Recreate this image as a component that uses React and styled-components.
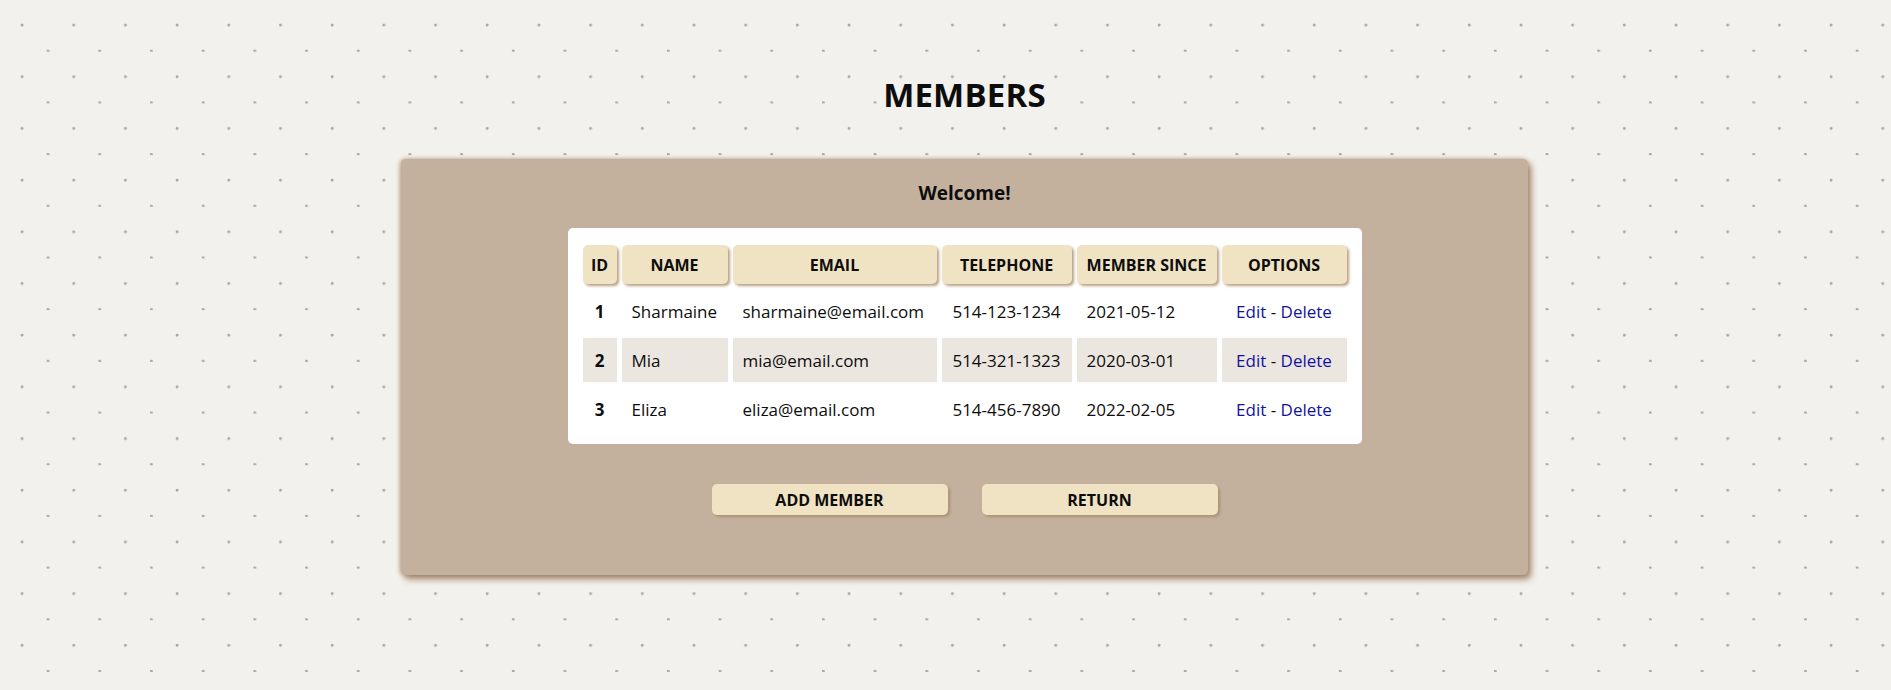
import React from "react";
import styled, { createGlobalStyle } from "styled-components";

const GlobalStyle = createGlobalStyle`
  body {
    margin: 0;
    font-family: "Open Sans", "Liberation Sans", sans-serif;
    color: #0d0d0d;
    background-color: #f3f1ed;
    background-image:
      radial-gradient(circle at 22px 25px, #aaa59f 1.1px, transparent 1.8px),
      radial-gradient(circle at 48px 51px, #aaa59f 1.1px, transparent 1.8px);
    background-size: 51.7px 51.7px;
    min-height: 690px;
  }
`;

const Page = styled.div`
  padding-left: 38px;
  padding-top: 71px;
  display: flex;
  flex-direction: column;
  align-items: center;
`;

const Title = styled.h1`
  margin: 0;
  font-size: 33px;
  line-height: 48px;
  font-weight: 700;
  letter-spacing: 0.2px;
`;

const Card = styled.div`
  margin-top: 40px;
  width: 1127px;
  box-sizing: border-box;
  background: #c4b19d;
  border-radius: 5px;
  box-shadow: 3px 4px 7px #9f8164, -1px 0 4px rgba(150, 120, 90, 0.6);
  padding: 20px 0 60px;
  display: flex;
  flex-direction: column;
  align-items: center;
`;

const Welcome = styled.h2`
  margin: 0;
  font-size: 19px;
  line-height: 28px;
  font-weight: 700;
`;

const Panel = styled.div`
  margin-top: 21px;
  background: #fff;
  border-radius: 5px;
  padding: 12px 10px 8px;
`;

const Table = styled.table`
  border-collapse: separate;
  border-spacing: 5px;
  font-size: 17px;
`;

const Head = styled.th`
  width: ${(p) => p.$w}px;
  height: 39px;
  box-sizing: border-box;
  padding: 0;
  background: #f0e3c4;
  border-radius: 5px;
  box-shadow: 2px 2px 3px #b79f84;
  font-size: 16px;
  font-weight: 700;
  text-align: center;
`;

const Row = styled.tr`
  height: 44px;
`;

const Cell = styled.td`
  padding: 0 10px;
  background: ${(p) => (p.$shade ? "#ece6e0" : "transparent")};
  text-align: ${(p) => p.$align || "left"};
  font-weight: ${(p) => (p.$bold ? 700 : 400)};
  white-space: nowrap;
`;

const Link = styled.a`
  color: #1212a0;
  text-decoration: none;
  cursor: pointer;
`;

const Buttons = styled.div`
  margin-top: 40px;
  display: flex;
  gap: 34px;
`;

const Button = styled.button`
  width: 236px;
  height: 31px;
  border: none;
  border-radius: 5px;
  background: #f0e3c4;
  box-shadow: 2px 2px 3px #ab9276;
  font-family: inherit;
  font-size: 16px;
  font-weight: 700;
  color: #0d0d0d;
  cursor: pointer;
`;

const columns = [
  { label: "ID", w: 34 },
  { label: "NAME", w: 106 },
  { label: "EMAIL", w: 204 },
  { label: "TELEPHONE", w: 130 },
  { label: "MEMBER SINCE", w: 140 },
  { label: "OPTIONS", w: 125 },
];

const members = [
  { id: 1, name: "Sharmaine", email: "sharmaine@email.com", phone: "514-123-1234", since: "2021-05-12" },
  { id: 2, name: "Mia", email: "mia@email.com", phone: "514-321-1323", since: "2020-03-01" },
  { id: 3, name: "Eliza", email: "eliza@email.com", phone: "514-456-7890", since: "2022-02-05" },
];

export default function App() {
  return (
    <>
      <GlobalStyle />
      <Page>
        <Title>MEMBERS</Title>
        <Card>
          <Welcome>Welcome!</Welcome>
          <Panel>
            <Table>
              <thead>
                <tr>
                  {columns.map((c) => (
                    <Head key={c.label} $w={c.w}>{c.label}</Head>
                  ))}
                </tr>
              </thead>
              <tbody>
                {members.map((m, i) => {
                  const shade = i % 2 === 1;
                  return (
                    <Row key={m.id}>
                      <Cell $shade={shade} $align="center" $bold>{m.id}</Cell>
                      <Cell $shade={shade}>{m.name}</Cell>
                      <Cell $shade={shade}>{m.email}</Cell>
                      <Cell $shade={shade} $align="center">{m.phone}</Cell>
                      <Cell $shade={shade}>{m.since}</Cell>
                      <Cell $shade={shade} $align="center">
                        <Link>Edit</Link> - <Link>Delete</Link>
                      </Cell>
                    </Row>
                  );
                })}
              </tbody>
            </Table>
          </Panel>
          <Buttons>
            <Button>ADD MEMBER</Button>
            <Button>RETURN</Button>
          </Buttons>
        </Card>
      </Page>
    </>
  );
}
